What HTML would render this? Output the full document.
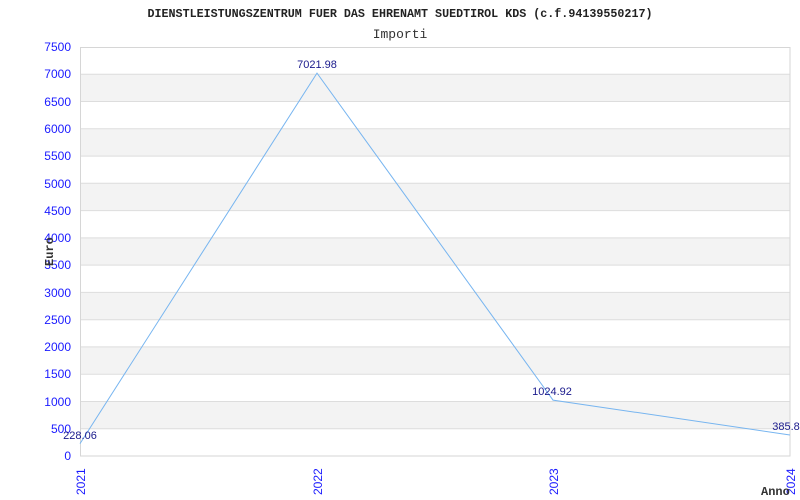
<!DOCTYPE html>
<html><head><meta charset="utf-8"><style>html,body{margin:0;padding:0;background:#fff}svg{display:block}</style></head><body>
<svg width="800" height="500" xmlns="http://www.w3.org/2000/svg">
<rect width="800" height="500" fill="#fff"/>
<text x="400" y="17" text-anchor="middle" font-family="Liberation Mono, monospace" font-size="11.7" font-weight="bold" fill="#222">DIENSTLEISTUNGSZENTRUM FUER DAS EHRENAMT SUEDTIROL KDS (c.f.94139550217)</text>
<text x="400" y="38" text-anchor="middle" font-family="Liberation Mono, monospace" font-size="13" fill="#333">Importi</text>
<g fill="#f3f3f3">
<rect x="80" y="401.5" width="710" height="27.2"/>
<rect x="80" y="346.9" width="710" height="27.3"/>
<rect x="80" y="292.4" width="710" height="27.3"/>
<rect x="80" y="237.9" width="710" height="27.2"/>
<rect x="80" y="183.3" width="710" height="27.3"/>
<rect x="80" y="128.8" width="710" height="27.3"/>
<rect x="80" y="74.3" width="710" height="27.2"/>
</g>
<g stroke="#dddddd" stroke-width="1">
<line x1="80" x2="790" y1="428.7" y2="428.7"/><line x1="80" x2="790" y1="401.5" y2="401.5"/>
<line x1="80" x2="790" y1="374.2" y2="374.2"/><line x1="80" x2="790" y1="346.9" y2="346.9"/>
<line x1="80" x2="790" y1="319.7" y2="319.7"/><line x1="80" x2="790" y1="292.4" y2="292.4"/>
<line x1="80" x2="790" y1="265.1" y2="265.1"/><line x1="80" x2="790" y1="237.9" y2="237.9"/>
<line x1="80" x2="790" y1="210.6" y2="210.6"/><line x1="80" x2="790" y1="183.3" y2="183.3"/>
<line x1="80" x2="790" y1="156.1" y2="156.1"/><line x1="80" x2="790" y1="128.8" y2="128.8"/>
<line x1="80" x2="790" y1="101.5" y2="101.5"/><line x1="80" x2="790" y1="74.3" y2="74.3"/>
</g>
<rect x="80.5" y="47.5" width="709.5" height="408.5" fill="none" stroke="#d6d6d6"/>
<g font-family="Liberation Sans, sans-serif" font-size="12" fill="#1a1aff" text-anchor="end">
<text x="71" y="460">0</text><text x="71" y="433">500</text><text x="71" y="406">1000</text>
<text x="71" y="378">1500</text><text x="71" y="351">2000</text><text x="71" y="324">2500</text>
<text x="71" y="297">3000</text><text x="71" y="269">3500</text><text x="71" y="242">4000</text>
<text x="71" y="215">4500</text><text x="71" y="188">5000</text><text x="71" y="160">5500</text>
<text x="71" y="133">6000</text><text x="71" y="106">6500</text><text x="71" y="78">7000</text>
<text x="71" y="51">7500</text>
</g>
<g font-family="Liberation Sans, sans-serif" font-size="12" fill="#1a1aff">
<text transform="translate(85,495) rotate(-90)">2021</text>
<text transform="translate(322,495) rotate(-90)">2022</text>
<text transform="translate(558,495) rotate(-90)">2023</text>
<text transform="translate(795,495) rotate(-90)">2024</text>
</g>
<text transform="translate(53,266) rotate(-90)" font-family="Liberation Mono, monospace" font-size="12" font-weight="bold" fill="#333">Euro</text>
<text x="761" y="495" font-family="Liberation Mono, monospace" font-size="12" font-weight="bold" fill="#333">Anno</text>
<polyline points="80,443.6 317,73.1 553,400.1 790,435" fill="none" stroke="#77b5f0" stroke-width="1"/>
<g font-family="Liberation Sans, sans-serif" font-size="11" fill="#1a1a8c" text-anchor="middle">
<text x="80" y="439">228.06</text>
<text x="317" y="68">7021.98</text>
<text x="552" y="395">1024.92</text>
<text x="786" y="430">385.8</text>
</g>
</svg>
</body></html>
